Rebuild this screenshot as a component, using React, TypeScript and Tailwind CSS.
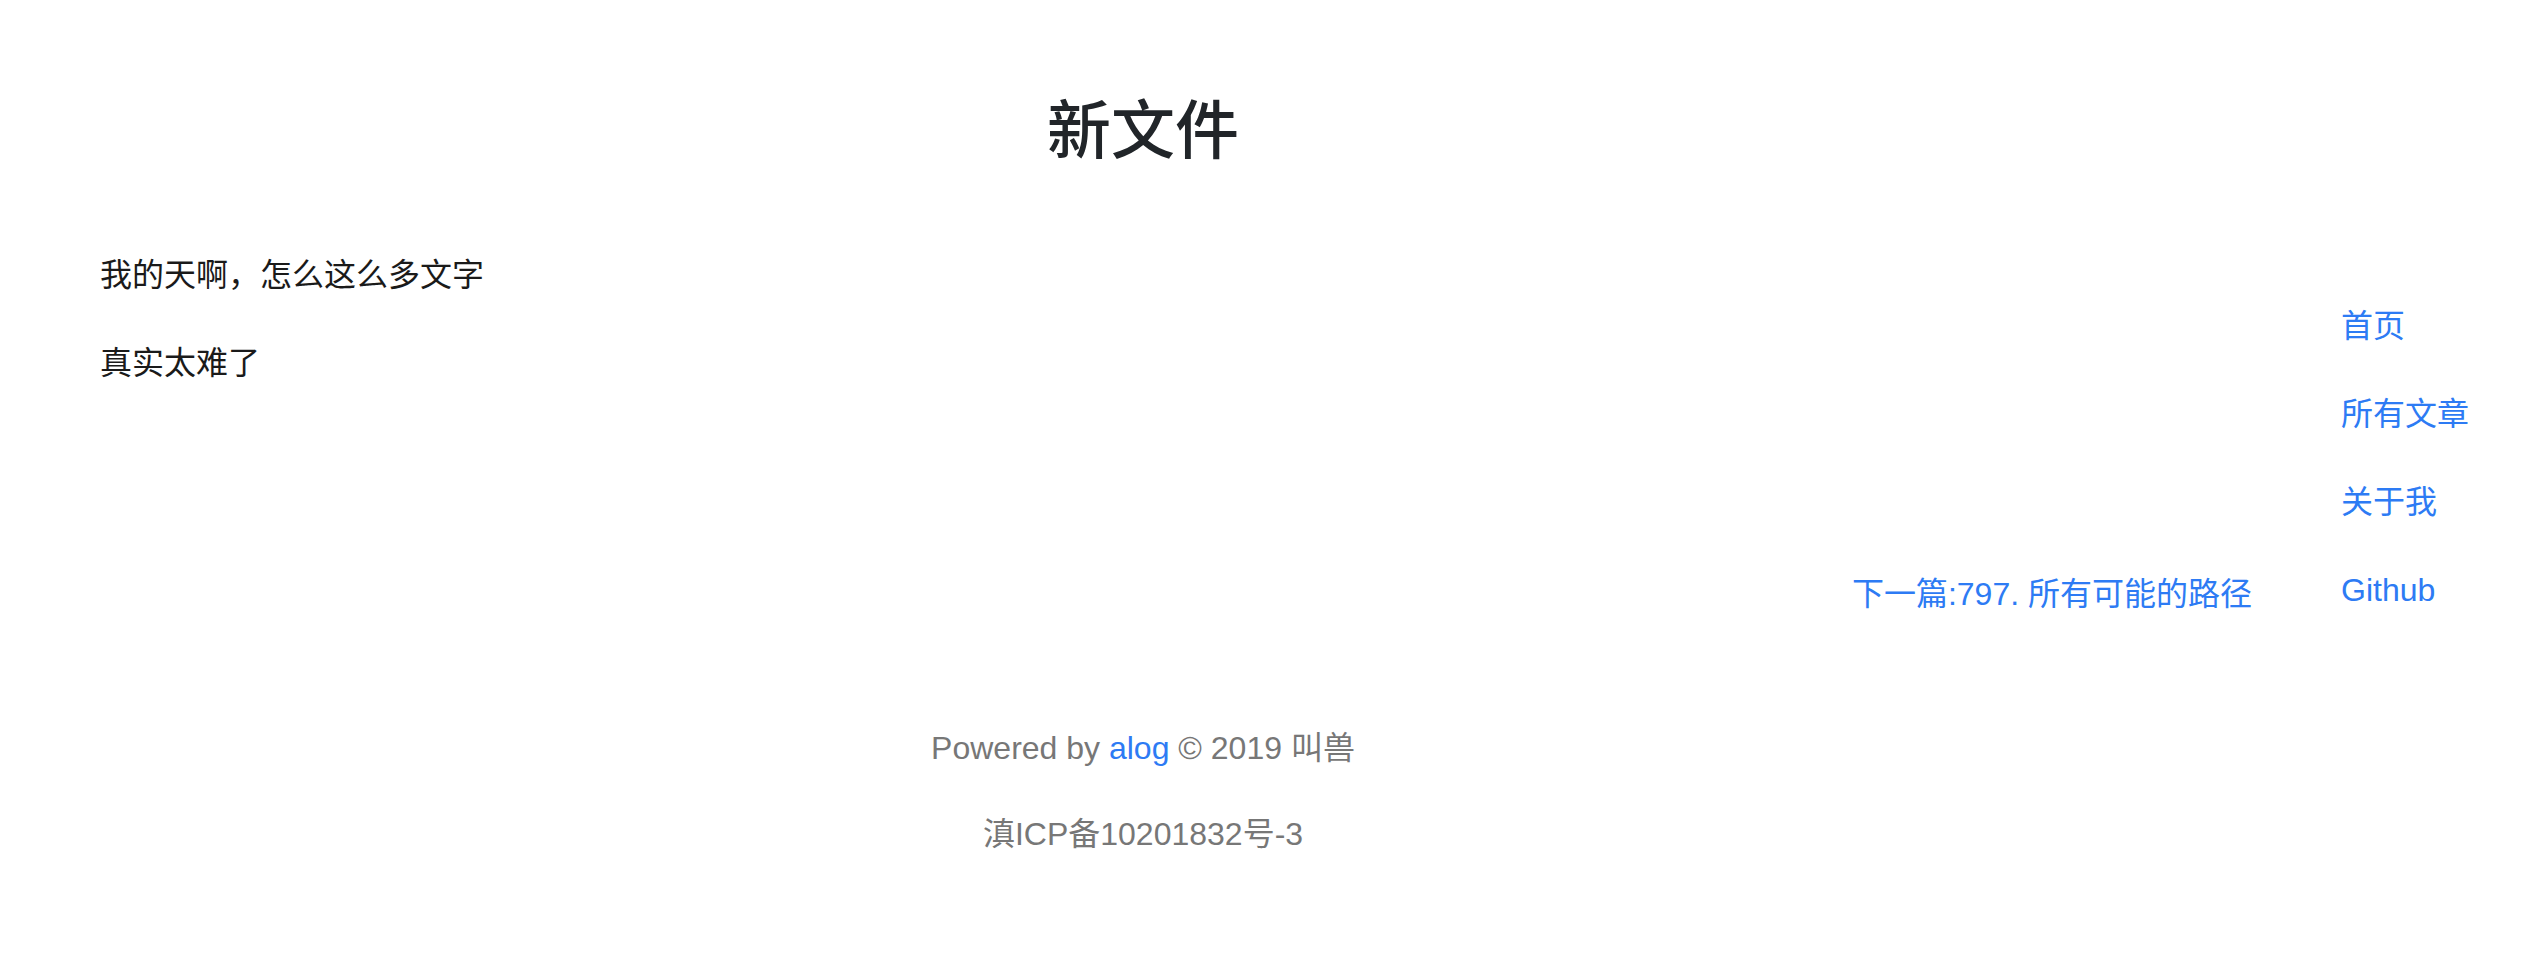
const font = "font-['Liberation_Sans','Noto_Sans_CJK_SC',sans-serif]";

const navItems = ["首页", "所有文章", "关于我", "Github"];

export default function App() {
  return (
    <div className={`flex min-h-[966px] bg-white ${font}`}>
      <main className="w-[2286px] shrink-0">
        <h1 className="mt-[93px] text-center text-[64px] font-medium leading-[77px] text-[#212529]">新文件</h1>

        <article className="mt-[81px] pl-[100px] text-[32px] leading-[48px] text-[#1a1a1a]">
          <p>我的天啊，怎么这么多文字</p>
          <p className="mt-[40px]">真实太难了</p>
        </article>

        <div className="mt-[183px] pr-[34px] text-right text-[32px] leading-[48px]">
          <a href="#" className="text-[#2d7bf4]">下一篇:797. 所有可能的路径</a>
        </div>

        <footer className="mt-[106px] text-center text-[32px] leading-[48px] text-[#777]">
          <p>
            Powered by <a href="#" className="text-[#2d7bf4]">alog</a> © 2019 叫兽
          </p>
          <p className="mt-[38px]">滇ICP备10201832号-3</p>
        </footer>
      </main>

      <aside className="flex-1 pl-[55px] pt-[302px]">
        <ul className="flex flex-col gap-[40px] text-[32px] leading-[48px]">
          {navItems.map((item) => (
            <li key={item}>
              <a href="#" className="text-[#2d7bf4]">{item}</a>
            </li>
          ))}
        </ul>
      </aside>
    </div>
  );
}
